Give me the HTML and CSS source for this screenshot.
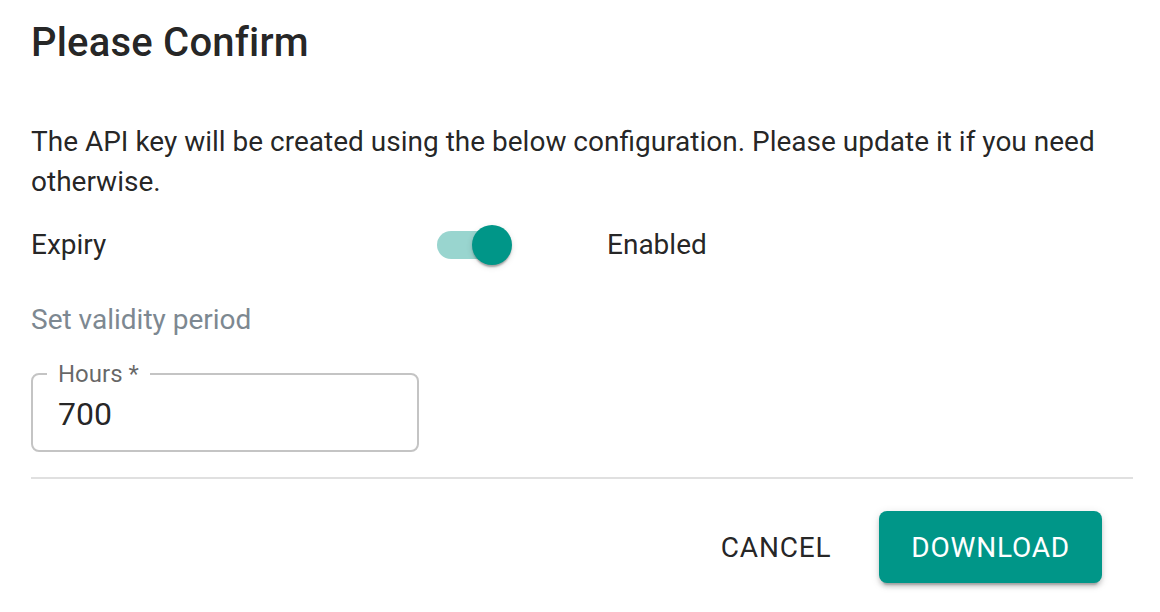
FILE: index.html
```html
<!DOCTYPE html>
<html lang="en">
<head>
<meta charset="utf-8">
<title>Please Confirm</title>
<link rel="stylesheet" href="styles.css">
</head>
<body>
<div class="dialog">
  <h2 class="title">Please Confirm</h2>
  <div class="content">
    <p class="intro">The API key will be created using the below configuration. Please update it if you need otherwise.</p>
    <div class="expiry-row">
      <span class="row-label">Expiry</span>
      <span class="switch">
        <span class="track"></span>
        <span class="thumb"></span>
      </span>
      <span class="row-value">Enabled</span>
    </div>
    <div class="section-label">Set validity period</div>
    <fieldset class="field">
      <legend class="field-label">Hours *</legend>
      <input class="field-input" type="text" value="700">
    </fieldset>
  </div>
  <hr class="divider">
  <div class="actions">
    <button class="btn btn-text">CANCEL</button>
    <button class="btn btn-contained">DOWNLOAD</button>
  </div>
</div>
</body>
</html>
```

FILE: styles.css
```css
* { box-sizing: border-box; }

html, body {
  margin: 0;
  padding: 0;
  background: #ffffff;
}

body {
  font-family: Roboto, "Liberation Sans", sans-serif;
  color: rgba(0, 0, 0, 0.87);
  width: 1160px;
  height: 612px;
  overflow: hidden;
}

.dialog {
  padding: 19px 27px 0 31px;
}

.title {
  margin: 0;
  font-size: 40px;
  font-weight: 500;
  line-height: 48px;
  letter-spacing: 0.2px;
}

.content {
  padding-top: 55px;
}

.intro {
  margin: 0;
  font-size: 28px;
  line-height: 40px;
  padding-right: 10px;
}

.expiry-row {
  margin-top: 5px;
  display: grid;
  grid-template-columns: 382px 194px auto;
  align-items: center;
  height: 76px;
  font-size: 28px;
  line-height: 40px;
}

.switch {
  position: relative;
  display: block;
  width: 116px;
  height: 76px;
  padding: 24px;
}

.track {
  display: block;
  width: 68px;
  height: 28px;
  border-radius: 14px;
  background: #009688;
  opacity: 0.4;
}

.thumb {
  position: absolute;
  left: 59px;
  top: 18px;
  width: 40px;
  height: 40px;
  border-radius: 50%;
  background: #009688;
  box-shadow: 0 4px 2px -2px rgba(0,0,0,0.2), 0 2px 2px 0 rgba(0,0,0,0.14), 0 2px 6px 0 rgba(0,0,0,0.12);
}

.section-label {
  margin-top: 17px;
  font-size: 28px;
  line-height: 40px;
  color: #7d8891;
}

.field {
  margin: 22px 0 0 0;
  width: 388px;
  height: 90px;
  padding: 0 25px;
  border: 2px solid #c4c4c4;
  border-radius: 8px;
}

.field-label {
  margin-left: -11px;
  padding: 0 11px;
  font-size: 24px;
  line-height: 24px;
  color: rgba(0, 0, 0, 0.6);
}

.field-input {
  display: block;
  margin-top: 9px;
  width: 100%;
  height: 38px;
  padding: 0;
  border: none;
  outline: none;
  background: transparent;
  font-family: Roboto, "Liberation Sans", sans-serif;
  font-size: 32px;
  line-height: 38px;
  color: rgba(0, 0, 0, 0.87);
}

.divider {
  margin: 25px 0 0 0;
  height: 2px;
  border: none;
  background: #e0e0e0;
}

.actions {
  display: flex;
  justify-content: flex-end;
  align-items: center;
  gap: 32px;
  padding: 32px 31px 0 0;
}

.btn {
  font-family: Roboto, "Liberation Sans", sans-serif;
  font-size: 28px;
  font-weight: 400;
  letter-spacing: 0.8px;
  height: 72px;
  border: none;
  border-radius: 8px;
  cursor: pointer;
}

.btn-text {
  background: transparent;
  color: rgba(0, 0, 0, 0.87);
  padding: 0 16px;
}

.btn-contained {
  background: #009688;
  color: #ffffff;
  padding: 0 32px;
  box-shadow: 0 6px 2px -4px rgba(0,0,0,0.2), 0 4px 4px 0 rgba(0,0,0,0.14), 0 2px 10px 0 rgba(0,0,0,0.12);
}
```
